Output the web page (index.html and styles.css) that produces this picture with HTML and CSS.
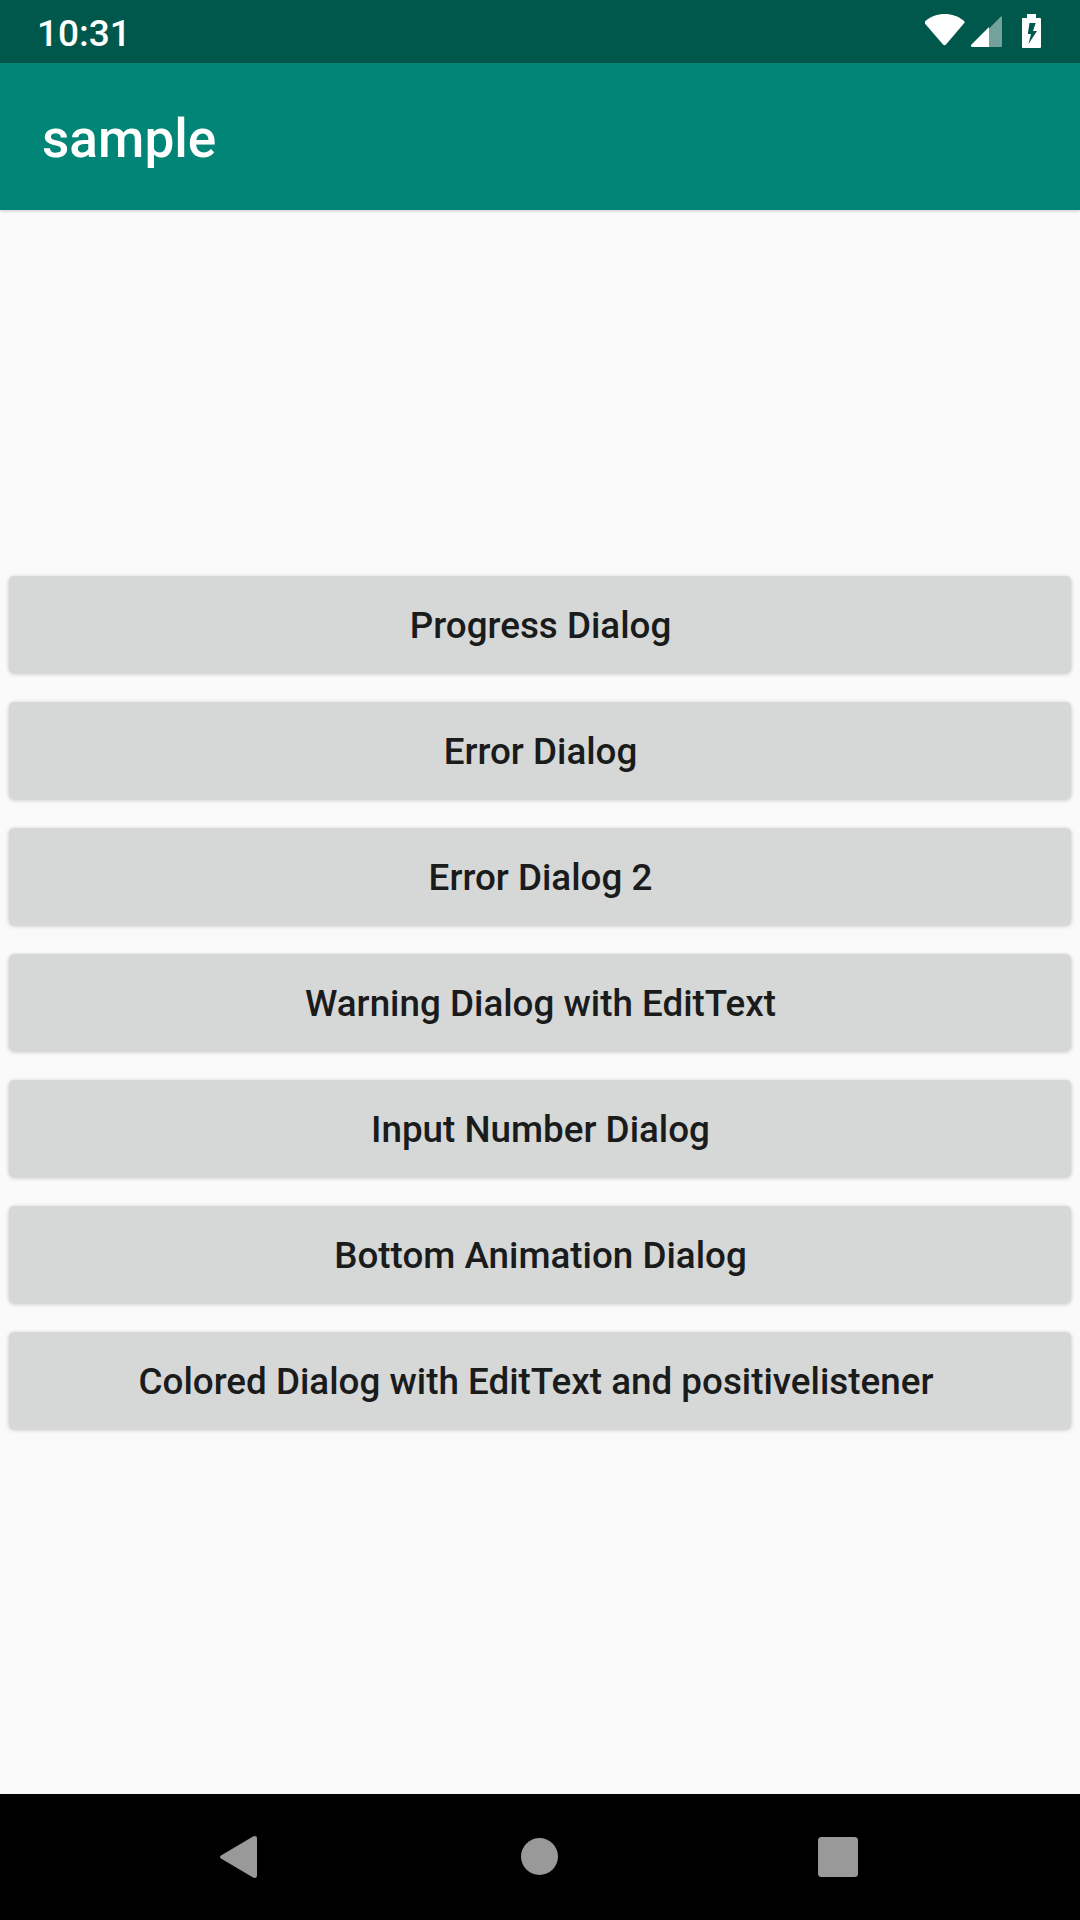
FILE: index.html
```html
<!DOCTYPE html>
<html lang="en">
<head>
<meta charset="utf-8">
<title>sample</title>
<link rel="stylesheet" href="styles.css">
</head>
<body>
<div class="screen">
  <header class="status">
    <span class="clock">10:31</span>
    <svg class="status-icons" width="120" height="39" viewBox="0 0 120 39" fill="#fff">
      <path d="M0.200 9.200C-.8 10 -.6 11 .3 12L18 32.500Q19.500 34 21 32.500L39.300 11Q40.200 10 38.800 8.800C28-.2 11-.2 .2 9.200Z"/>
      <path d="M64 16.500L76 4.500Q77 4 77 5V34Q77 35 76 35H64Z" opacity=".45"/>
      <path d="M64 15V35H47Q45.500 34.500 46 33Z"/>
      <path fill-rule="evenodd" d="M102 2H111V6H115Q116 6 116 7V35Q116 36 115 36H98Q97 36 97 35V7Q97 6 98 6H102ZM104.500 11L102.800 22H106L103.500 32L112 19H108L110.700 11Z"/>
    </svg>
  </header>
  <div class="toolbar"><h1 class="title">sample</h1></div>
  <main class="content">
    <button class="btn">Progress Dialog</button>
    <button class="btn">Error Dialog</button>
    <button class="btn">Error Dialog 2</button>
    <button class="btn">Warning Dialog with EditText</button>
    <button class="btn">Input Number Dialog</button>
    <button class="btn">Bottom Animation Dialog</button>
    <button class="btn btn-long">Colored Dialog with EditText and positivelistener</button>
  </main>
  <nav class="navbar">
    <svg class="nav-icon" viewBox="0 0 44 44"><path d="M2 20.500L34 1.500Q38 0 38 3.500V40.500Q38 44 34 42.500L2 23.500Q0 22 2 20.500Z"/></svg>
    <svg class="nav-icon" viewBox="0 0 44 44"><circle cx="21.500" cy="21.500" r="18.500"/></svg>
    <svg class="nav-icon" viewBox="0 0 44 44"><rect x="1" y="2" width="40" height="40" rx="3.500"/></svg>
  </nav>
</div>
</body>
</html>
```
FILE: styles.css
```css
* { box-sizing: border-box; }
body { margin: 0; font-family: Roboto, sans-serif; }
.screen { width: 1080px; height: 1920px; display: flex; flex-direction: column; background: #fafafa; }
.status { height: 63px; padding: 0 35px 0 37px; display: flex; justify-content: space-between; align-items: center; background: #00574b; color: #fff; }
.clock { font-size: 37px; font-weight: 500; line-height: 63px; padding-top: 3px; }
.toolbar { height: 147px; padding: 5px 42px 0; display: flex; align-items: center; background: #008577; box-shadow: 0 1px 3px rgba(0,0,0,.2); }
.title { margin: 0; color: #fff; font-size: 53.200px; font-weight: 500; }
.content { flex: 1; display: flex; flex-direction: column; justify-content: center; gap: 29px; padding: 1px 9px 0; }
.btn { height: 97px; border: 0; border-radius: 5px; background: #d6d7d7; box-shadow: 0 1px 4px rgba(0,0,0,.22); color: #1a1b1b; font-family: inherit; font-size: 36.800px; font-weight: 500; padding: 2px 0 0 1px; }
.btn-long { padding-right: 9px; }
.navbar { height: 126px; display: flex; align-items: center; justify-content: center; gap: 255px; background: #000; }
.nav-icon { width: 44px; height: 44px; fill: #999; }
```
